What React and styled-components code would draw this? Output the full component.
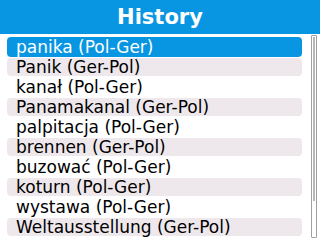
import React from 'react'
import styled, { createGlobalStyle } from 'styled-components'

const entries = [
    'panika (Pol-Ger)',
    'Panik (Ger-Pol)',
    'kanał (Pol-Ger)',
    'Panamakanal (Ger-Pol)',
    'palpitacja (Pol-Ger)',
    'brennen (Ger-Pol)',
    'buzować (Pol-Ger)',
    'koturn (Pol-Ger)',
    'wystawa (Pol-Ger)',
    'Weltausstellung (Ger-Pol)'
]

const App = () => (
    <Root>
        <GlobalStyle/>
        <Header>History</Header>
        <Body>
            <List>
                {entries.map((text, i) => (
                    <Row key = {text}>
                        <Item selected = {i === 0} shaded = {i % 2 === 1}>{text}</Item>
                    </Row>
                ))}
            </List>
            <Track>
                <Thumb/>
            </Track>
        </Body>
    </Root>
)

const GlobalStyle = createGlobalStyle `
    html, body {
        margin: 0;
        padding: 0;
        background: #fff;
    }
    body {
        font-family: "DejaVu Sans", Verdana, sans-serif;
    }
`

const Root = styled.div `
    width: 320px;
    height: 240px;
    overflow: hidden;
    background: #fff;
    display: flex;
    flex-direction: column;
`

const Header = styled.div `
    height: 34px;
    background: #0896e2;
    color: #fff;
    font-weight: bold;
    font-size: 21px;
    display: flex;
    align-items: center;
    justify-content: center;
    box-sizing: border-box;
`

const Body = styled.div `
    flex: 1;
    display: flex;
    padding: 3px 3px 0 7px;
    gap: 9px;
`

const List = styled.div `
    flex: 1;
    display: flex;
    flex-direction: column;
`

const Row = styled.div `
    height: 20px;
    display: flex;
    flex-direction: column;
    justify-content: center;
`

const Item = styled.div `
    height: ${p => (p.selected ? '20px' : '18px')};
    border-radius: 4px;
    padding-left: 9px;
    display: flex;
    align-items: center;
    font-size: 17px;
    white-space: nowrap;
    color: ${p => (p.selected ? '#fff' : '#000')};
    background: ${p => (p.selected ? '#0896e2' : p.shaded ? '#eee8ec' : 'transparent')};
`

const Track = styled.div `
    width: 6px;
    height: 203px;
    box-sizing: border-box;
    border: 1px solid #a0a0a0;
    border-radius: 1px;
    padding: 1px;
    margin-top: -2px;
`

const Thumb = styled.div `
    height: 164px;
    box-sizing: border-box;
    border: 1px solid #b8b8b8;
    background: #fff;
`

export default App
